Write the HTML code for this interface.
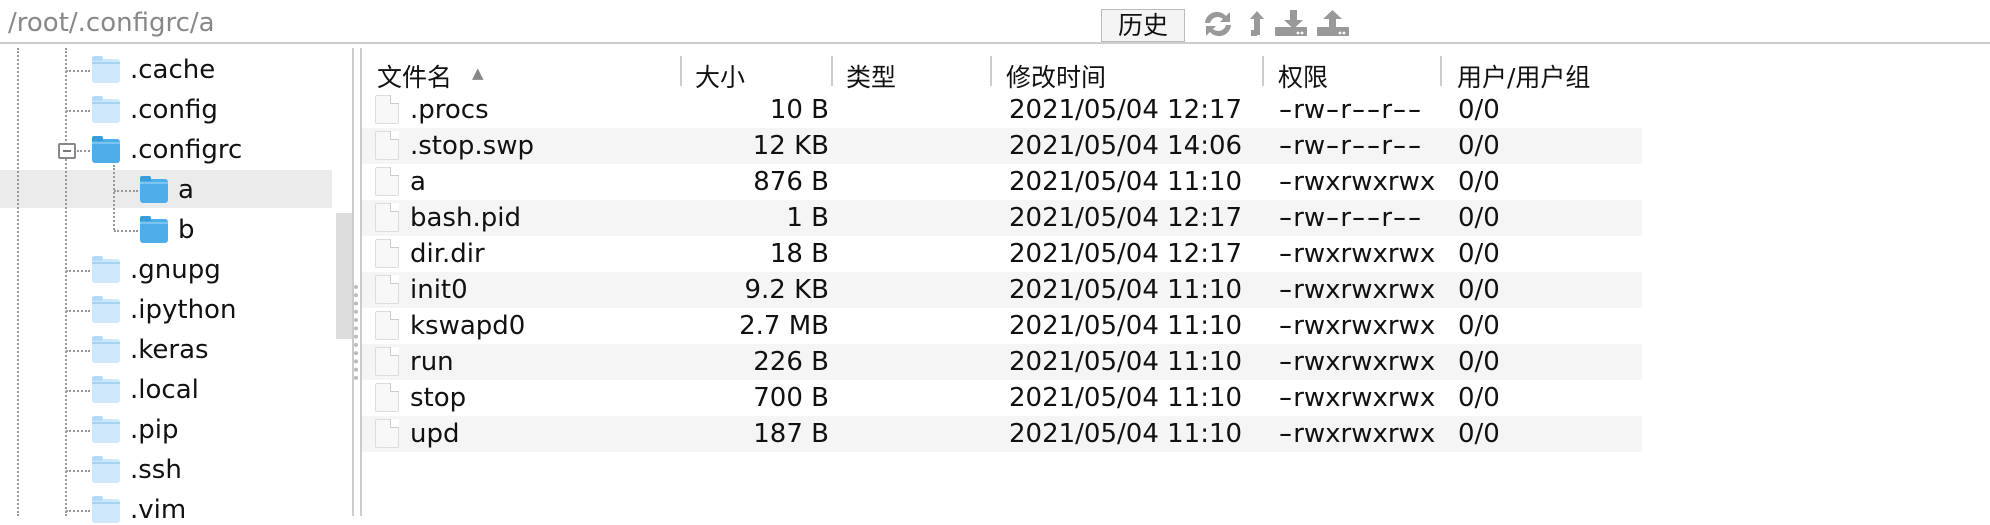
<!DOCTYPE html>
<html><head><meta charset="utf-8"><style>
*{margin:0;padding:0;box-sizing:border-box}
body{width:1990px;height:516px;background:#fff;overflow:hidden;position:relative;font-family:"DejaVu Sans","Noto Sans CJK SC",sans-serif;font-size:26px;color:#111}
.a{position:absolute;white-space:nowrap}
.t{line-height:30px}
.fold{position:absolute;width:28px;height:24px;border-radius:3px;background:#cfe8fb}
.fold:before{content:"";position:absolute;left:0;top:-3px;width:11px;height:5px;background:#b6dbf6;border-radius:2px 2px 0 0}
.fold:after{content:"";position:absolute;left:0;top:3px;width:28px;height:2px;background:#a8d2f2}
.fold.b{background:#4eaee9}.fold.b:before{background:#3b9ddc}.fold.b:after{background:#7cc5f2}
.dv{position:absolute;border-left:2px dotted #999}
.dh{position:absolute;border-top:2px dotted #999}
.fi{position:absolute;width:24px;height:29px;border:1px solid #ddd;background:#f8f8f8;border-radius:2px}
.fi:after{content:"";position:absolute;right:-1px;top:-1px;width:8px;height:8px;background:#fff;border-left:1px solid #ccc;border-bottom:1px solid #ccc}
.row{position:absolute;left:362px;width:1280px;height:36px}
.sep{position:absolute;top:56px;width:2px;height:30px;background:#ccc}
.h{font-size:25px;top:58px}
.d{display:inline-block;width:15.2px;text-align:center;transform:scaleX(1.5)}
</style></head><body>
<div class="a" style="left:8px;top:8px;color:#888">/root/.configrc/a</div>
<div class="a" style="left:1101px;top:9px;width:84px;height:33px;border:1px solid #bbb;background:#f4f4f4;text-align:center;line-height:31px;font-size:25px">历史</div>
<svg class="a" style="left:1203px;top:9px" width="150" height="30" viewBox="0 0 150 30">
<g fill="#999">
<path d="M2 14a12 12 0 0 1 21-7l4-4v10h-10l3-3a8 8 0 0 0-13 4z"/>
<path d="M28 16a12 12 0 0 1-21 7l-4 4v-10h10l-3 3a8 8 0 0 0 13-4z"/>
<path d="M54 2l-7 8h4v16h6v-16h4z"/>
<rect x="48" y="21" width="6" height="6"/>
<path d="M87 1h7v10h6l-9.5 9-9.5-9h6z"/>
<rect x="72" y="18" width="32" height="9" rx="1"/>
<path d="M129.5 1l9.5 9h-6v9h-7v-9h-6z"/>
<rect x="114" y="18" width="32" height="9" rx="1"/>
</g>
<g fill="#fff"><circle cx="95" cy="24" r="1.4"/><circle cx="99" cy="24" r="1.4"/><circle cx="137" cy="24" r="1.4"/><circle cx="141" cy="24" r="1.4"/></g>
</svg>
<div class="a" style="left:0;top:42px;width:1990px;height:2px;background:#ccc"></div>
<div class="a" style="left:0;top:170px;width:332px;height:38px;background:#ebebeb"></div>
<div class="a" style="left:336px;top:213px;width:16px;height:126px;background:#ddd"></div>
<div class="a" style="left:352px;top:48px;width:2px;height:468px;background:#ccc"></div>
<div class="a" style="left:360px;top:48px;width:2px;height:468px;background:#ccc"></div>
<div class="a" style="left:354px;top:285px;width:4px;height:95px;border-left:4px dotted #bbb"></div>
<div class="dv" style="left:17px;top:48px;height:468px"></div>
<div class="dv" style="left:65px;top:48px;height:468px"></div>
<div class="dv" style="left:113px;top:165px;height:65px"></div>
<div class="a" style="left:58px;top:143px;width:18px;height:16px;border:2px solid #888;border-radius:2px;background:#fff"><div style="position:absolute;left:3px;top:5px;width:8px;height:2px;background:#777"></div></div>
<div class="dh" style="left:66px;top:70px;width:24px"></div>
<div class="dh" style="left:66px;top:110px;width:24px"></div>
<div class="dh" style="left:77px;top:150px;width:13px"></div>
<div class="dh" style="left:114px;top:190px;width:24px"></div>
<div class="dh" style="left:114px;top:230px;width:24px"></div>
<div class="dh" style="left:66px;top:270px;width:24px"></div>
<div class="dh" style="left:66px;top:310px;width:24px"></div>
<div class="dh" style="left:66px;top:350px;width:24px"></div>
<div class="dh" style="left:66px;top:390px;width:24px"></div>
<div class="dh" style="left:66px;top:430px;width:24px"></div>
<div class="dh" style="left:66px;top:470px;width:24px"></div>
<div class="dh" style="left:66px;top:510px;width:24px"></div>
<div class="fold" style="left:92px;top:59px"></div><div class="a t" style="left:130px;top:55px">.cache</div>
<div class="fold" style="left:92px;top:99px"></div><div class="a t" style="left:130px;top:95px">.config</div>
<div class="fold b" style="left:92px;top:139px"></div><div class="a t" style="left:130px;top:135px">.configrc</div>
<div class="fold b" style="left:140px;top:179px"></div><div class="a t" style="left:178px;top:175px">a</div>
<div class="fold b" style="left:140px;top:219px"></div><div class="a t" style="left:178px;top:215px">b</div>
<div class="fold" style="left:92px;top:259px"></div><div class="a t" style="left:130px;top:255px">.gnupg</div>
<div class="fold" style="left:92px;top:299px"></div><div class="a t" style="left:130px;top:295px">.ipython</div>
<div class="fold" style="left:92px;top:339px"></div><div class="a t" style="left:130px;top:335px">.keras</div>
<div class="fold" style="left:92px;top:379px"></div><div class="a t" style="left:130px;top:375px">.local</div>
<div class="fold" style="left:92px;top:419px"></div><div class="a t" style="left:130px;top:415px">.pip</div>
<div class="fold" style="left:92px;top:459px"></div><div class="a t" style="left:130px;top:455px">.ssh</div>
<div class="fold" style="left:92px;top:499px"></div><div class="a t" style="left:130px;top:495px">.vim</div>
<div class="a h" style="left:377px">文件名</div>
<div class="a" style="left:472px;top:64px;font-size:15px;color:#888">▲</div>
<div class="a h" style="left:695px">大小</div>
<div class="a h" style="left:846px">类型</div>
<div class="a h" style="left:1006px">修改时间</div>
<div class="a h" style="left:1278px">权限</div>
<div class="a h" style="left:1457px">用户/用户组</div>
<div class="sep" style="left:680px"></div><div class="sep" style="left:831px"></div><div class="sep" style="left:990px"></div><div class="sep" style="left:1262px"></div><div class="sep" style="left:1440px"></div>
<div id="rows"></div>
<script>
var d=[[".procs","10 B","12:17","-rw-r--r--"],[".stop.swp","12 KB","14:06","-rw-r--r--"],["a","876 B","11:10","-rwxrwxrwx"],["bash.pid","1 B","12:17","-rw-r--r--"],["dir.dir","18 B","12:17","-rwxrwxrwx"],["init0","9.2 KB","11:10","-rwxrwxrwx"],["kswapd0","2.7 MB","11:10","-rwxrwxrwx"],["run","226 B","11:10","-rwxrwxrwx"],["stop","700 B","11:10","-rwxrwxrwx"],["upd","187 B","11:10","-rwxrwxrwx"]];
var h="";d.forEach(function(r,i){var y=92+i*36;
h+='<div class="row" style="top:'+y+'px;background:'+(i%2?'#f5f5f5':'#fff')+'"></div>';
h+='<div class="fi" style="left:375px;top:'+(y+3)+'px"></div>';
h+='<div class="a t" style="left:410px;top:'+(y+3)+'px">'+r[0]+'</div>';
h+='<div class="a t" style="left:630px;width:199px;text-align:right;top:'+(y+3)+'px">'+r[1]+'</div>';
h+='<div class="a t" style="left:1009px;top:'+(y+3)+'px">2021/05/04 '+r[2]+'</div>';
h+='<div class="a t" style="left:1278px;top:'+(y+3)+'px">'+r[3].replace(/-/g,'<span class="d">-</span>')+'</div>';
h+='<div class="a t" style="left:1458px;top:'+(y+3)+'px">0/0</div>';});
document.getElementById("rows").innerHTML=h;
</script>
</body></html>
